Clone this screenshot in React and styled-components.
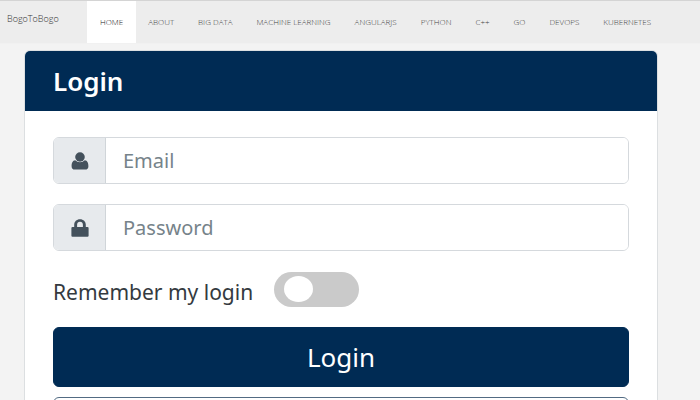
import React, { useState } from "react";
import styled, { createGlobalStyle } from "styled-components";

const navy = "#002b54";

const GlobalStyle = createGlobalStyle`
  * { box-sizing: border-box; }
  body {
    margin: 0;
    background: #f3f3f3;
    color: #343a40;
    font-family: "Noto Sans", "Open Sans", sans-serif;
  }
  button, input { font-family: inherit; }
`;

const Page = styled.div`
  display: flex;
  flex-direction: column;
  height: 100vh;
  overflow: hidden;
`;

const TopBar = styled.header`
  display: flex;
  flex-shrink: 0;
  align-items: stretch;
  height: 44px;
  border-top: 1px solid #d4d4d4;
  border-bottom: 1px solid #f1f1f1;
  background: #ededed;
  font-family: "Open Sans", sans-serif;
`;

const Brand = styled.a`
  flex-shrink: 0;
  width: 87px;
  padding-left: 7px;
  color: #333;
  font-size: 9px;
  font-weight: 300;
  line-height: 36px;
  text-decoration: none;
`;

const NavLinks = styled.nav`
  display: flex;
`;

const NavLink = styled.a`
  padding: 0 ${({ $active }) => ($active ? "13px" : "12px")};
  background: ${({ $active }) => ($active ? "#fff" : "transparent")};
  color: ${({ $active }) => ($active ? "#222" : "#444")};
  font-size: 8px;
  font-weight: 300;
  line-height: 42px;
  text-decoration: none;
  white-space: nowrap;
`;

const Card = styled.main`
  flex-shrink: 0;
  margin: 6px 42px 0 24px;
  border: 1px solid #dcdfe1;
  border-radius: 6px;
  background: #fff;
  overflow: hidden;
`;

const CardHeader = styled.header`
  padding: 12px 28px;
  background: ${navy};
`;

const Title = styled.h1`
  margin: 0;
  color: #fff;
  font-size: 26px;
  font-weight: 600;
  line-height: 36px;
`;

const Form = styled.form`
  display: flex;
  flex-direction: column;
  padding: 26px 28px;
`;

const InputGroup = styled.label`
  display: flex;
  height: 47px;
  margin-bottom: 20px;
  border: 1px solid #d5d9dd;
  border-radius: 6px;
  overflow: hidden;
`;

const IconCell = styled.span`
  display: flex;
  flex-shrink: 0;
  align-items: center;
  justify-content: center;
  width: 52px;
  border-right: 1px solid #d0d5d9;
  background: #e7eaed;
  color: #44515c;
`;

const Field = styled.input`
  flex: 1;
  min-width: 0;
  padding: 0 17px;
  border: 0;
  outline: 0;
  background: #fff;
  color: #343a40;
  font-size: 20px;
  &::placeholder { color: #76838a; opacity: 1; }
`;

const RememberRow = styled.label`
  display: flex;
  align-items: center;
  gap: 21px;
  height: 36px;
  margin-bottom: 20px;
  font-size: 21px;
  line-height: 28px;
`;

const RememberText = styled.span`
  padding-top: 6px;
`;

const Switch = styled.input`
  display: flex;
  align-items: center;
  appearance: none;
  width: 85px;
  height: 35px;
  margin: 0;
  padding: 0 10px;
  border-radius: 18px;
  background: ${({ checked }) => (checked ? navy : "#cacaca")};
  justify-content: ${({ checked }) => (checked ? "flex-end" : "flex-start")};
  cursor: pointer;
  &::before {
    content: "";
    width: 29px;
    height: 26px;
    border-radius: 50%;
    background: #fff;
  }
`;

const Button = styled.button`
  height: 60px;
  margin-bottom: 10px;
  border: 1px solid ${({ $outline }) => ($outline ? "#526b83" : navy)};
  border-radius: 6px;
  background: ${({ $outline }) => ($outline ? "#fff" : navy)};
  color: ${({ $outline }) => ($outline ? navy : "#fff")};
  font-size: 26px;
  line-height: 36px;
  cursor: pointer;
`;

const links = ["HOME", "ABOUT", "BIG DATA", "MACHINE LEARNING", "ANGULARJS", "PYTHON", "C++", "GO", "DEVOPS", "KUBERNETES"];

function UserIcon() {
  return (
    <svg width="18" height="18" viewBox="0 0 18 18" fill="currentColor" aria-hidden="true">
      <ellipse cx="9" cy="5" rx="4.8" ry="4.7" />
      <path d="M4.2 8.2C1.5 8.4.6 11 .6 14.2.6 16.4 1.8 17.6 3.8 17.6h10.4c2 0 3.2-1.2 3.2-3.4 0-3.2-.9-5.8-3.6-6A7 7 0 0 1 9 10.3a7 7 0 0 1-4.8-2.1Z" />
    </svg>
  );
}

function LockIcon() {
  return (
    <svg width="18" height="18" viewBox="0 0 18 18" fill="currentColor" aria-hidden="true">
      <path fillRule="evenodd" d="M3.2 8V5.8C3.2 2.5 5.6.2 9 .2s5.8 2.3 5.8 5.6V8h1.7q1.1 0 1.1 1.1v7.6q0 1.1-1.1 1.1h-15q-1.1 0-1.1-1.1V9.1q0-1.1 1.1-1.1Zm2.9 0h5.8V5.8c0-1.900-1.100-3-2.900-3s-2.900 1.100-2.900 3Z" />
    </svg>
  );
}

export default function App() {
  const [remember, setRemember] = useState(false);
  return (
    <Page>
      <GlobalStyle />
      <TopBar>
        <Brand href="#">BogoToBogo</Brand>
        <NavLinks>
          {links.map((name) => (
            <NavLink key={name} href="#" $active={name === "HOME"}>{name}</NavLink>
          ))}
        </NavLinks>
      </TopBar>
      <Card>
        <CardHeader><Title>Login</Title></CardHeader>
        <Form onSubmit={(event) => event.preventDefault()}>
          <InputGroup>
            <IconCell><UserIcon /></IconCell>
            <Field type="email" placeholder="Email" aria-label="Email" />
          </InputGroup>
          <InputGroup>
            <IconCell><LockIcon /></IconCell>
            <Field type="password" placeholder="Password" aria-label="Password" />
          </InputGroup>
          <RememberRow>
            <RememberText>Remember my login</RememberText>
            <Switch type="checkbox" role="switch" checked={remember} onChange={(event) => setRemember(event.target.checked)} />
          </RememberRow>
          <Button type="submit">Login</Button>
          <Button type="button" $outline aria-label="Other sign-in option" />
        </Form>
      </Card>
    </Page>
  );
}
